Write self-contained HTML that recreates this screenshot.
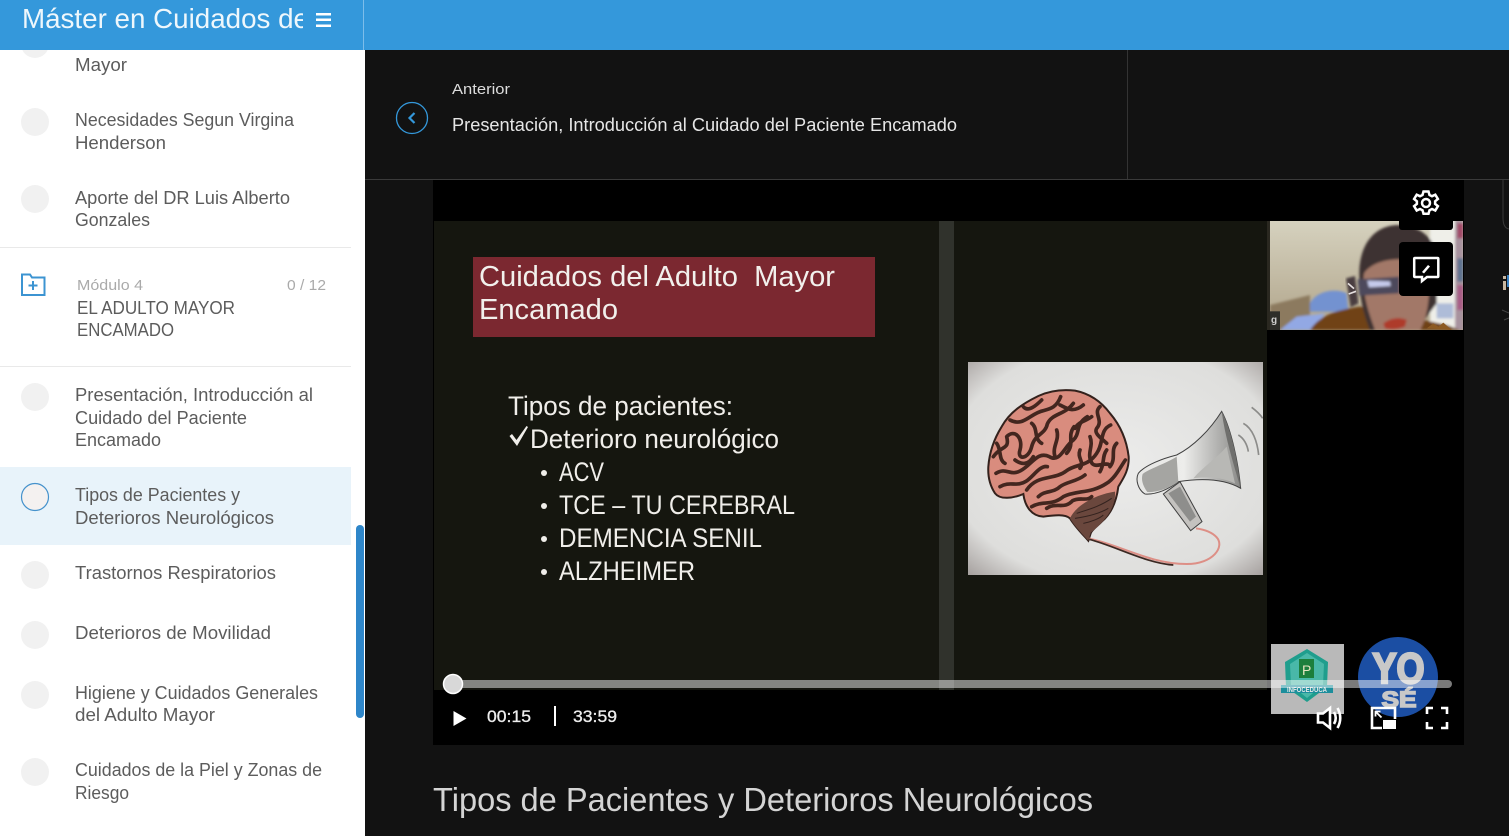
<!DOCTYPE html>
<html lang="es">
<head>
<meta charset="utf-8">
<title>Máster en Cuidados del Adulto Mayor</title>
<style>
html,body{margin:0;padding:0;width:1509px;height:836px;overflow:hidden;background:#121212}
svg{display:block;position:absolute;left:0;top:0}
text{font-family:"Liberation Sans",Arial,sans-serif;white-space:pre}
.s{font-size:18px;fill:#5c5c5c}
.v{font-size:29px;fill:#f2f0ec}
.b{font-size:27px;fill:#f0eeea}
.c{font-size:17px;fill:#eeeeee;stroke:#eeeeee;stroke-width:.3}
</style>
</head>
<body>
<svg width="1509" height="836" viewBox="0 0 1509 836" xmlns="http://www.w3.org/2000/svg">
<defs>
<clipPath id="tc"><rect x="0" y="0" width="303" height="50"/></clipPath>
<clipPath id="wc"><rect x="1270" y="221" width="193" height="109"/></clipPath>
<clipPath id="ic"><rect x="968" y="362" width="295" height="213"/></clipPath>
<radialGradient id="ig" cx="50%" cy="48%" r="80%">
<stop offset="0" stop-color="#ececeb"/><stop offset=".7" stop-color="#dededc"/><stop offset="1" stop-color="#8a8280"/>
</radialGradient>
<linearGradient id="wall" x1="0" y1="0" x2="0" y2="1"><stop offset="0" stop-color="#d6d2bf"/><stop offset="1" stop-color="#b0a48a"/></linearGradient>
<linearGradient id="bell" x1="0" y1="0" x2="1" y2="0"><stop offset="0" stop-color="#e6e6e4"/><stop offset=".45" stop-color="#ededeb"/><stop offset=".85" stop-color="#a5a5a3"/><stop offset="1" stop-color="#8a8a88"/></linearGradient>
<filter id="b2" x="-5%" y="-5%" width="110%" height="110%"><feGaussianBlur stdDeviation="4"/></filter>
</defs>

<!-- page backgrounds -->
<rect width="1509" height="836" fill="#121212"/>
<rect x="0" y="50" width="365" height="786" fill="#fff"/>

<!-- sidebar -->
<rect x="0" y="467" width="351" height="78" fill="#e8f3fa"/>
<rect x="0" y="247" width="351" height="1" fill="#e9e9e9"/>
<rect x="0" y="366" width="351" height="1" fill="#e9e9e9"/>
<g fill="#f1f1f1">
<circle cx="35" cy="44" r="14"/>
<circle cx="35" cy="122" r="14"/>
<circle cx="35" cy="199" r="14"/>
<circle cx="35" cy="397" r="14"/>
<circle cx="35" cy="575" r="14"/>
<circle cx="35" cy="635" r="14"/>
<circle cx="35" cy="695" r="14"/>
<circle cx="35" cy="772" r="14"/>
</g>
<circle cx="35" cy="497" r="13.500" fill="#f4f1f0" stroke="#4592cc" stroke-width="1.200"/>
<rect x="356" y="525" width="8" height="193" rx="4" fill="#2e86c9"/>

<text class="s" x="75" y="71" textLength="52" lengthAdjust="spacingAndGlyphs">Mayor</text>
<text class="s" x="75" y="126" textLength="219" lengthAdjust="spacingAndGlyphs">Necesidades Segun Virgina</text>
<text class="s" x="75" y="149" textLength="91" lengthAdjust="spacingAndGlyphs">Henderson</text>
<text class="s" x="75" y="204" textLength="215" lengthAdjust="spacingAndGlyphs">Aporte del DR Luis Alberto</text>
<text class="s" x="75" y="226" textLength="75" lengthAdjust="spacingAndGlyphs">Gonzales</text>
<text class="s" x="75" y="401" textLength="238" lengthAdjust="spacingAndGlyphs">Presentación, Introducción al</text>
<text class="s" x="75" y="424" textLength="172" lengthAdjust="spacingAndGlyphs">Cuidado del Paciente</text>
<text class="s" x="75" y="446" textLength="86" lengthAdjust="spacingAndGlyphs">Encamado</text>
<text class="s" x="75" y="501" textLength="165" lengthAdjust="spacingAndGlyphs">Tipos de Pacientes y</text>
<text class="s" x="75" y="524" textLength="199" lengthAdjust="spacingAndGlyphs">Deterioros Neurológicos</text>
<text class="s" x="75" y="579" textLength="201" lengthAdjust="spacingAndGlyphs">Trastornos Respiratorios</text>
<text class="s" x="75" y="639" textLength="196" lengthAdjust="spacingAndGlyphs">Deterioros de Movilidad</text>
<text class="s" x="75" y="699" textLength="243" lengthAdjust="spacingAndGlyphs">Higiene y Cuidados Generales</text>
<text class="s" x="75" y="721" textLength="140" lengthAdjust="spacingAndGlyphs">del Adulto Mayor</text>
<text class="s" x="75" y="776" textLength="247" lengthAdjust="spacingAndGlyphs">Cuidados de la Piel y Zonas de</text>
<text class="s" x="75" y="799" textLength="54" lengthAdjust="spacingAndGlyphs">Riesgo</text>

<!-- module header -->
<path d="M22 274.500h8l2 3h12.500v17.500H22z" fill="none" stroke="#3c94d2" stroke-width="2"/>
<path d="M33 281v9M28.500 285.500h9" stroke="#3c94d2" stroke-width="2" fill="none"/>
<text x="77" y="290" font-size="15" fill="#aaaaaa" textLength="66" lengthAdjust="spacingAndGlyphs">Módulo 4</text>
<text x="287" y="290" font-size="15" fill="#aaaaaa" textLength="39" lengthAdjust="spacingAndGlyphs">0 / 12</text>
<text class="s" x="77" y="314" textLength="158" lengthAdjust="spacingAndGlyphs">EL ADULTO MAYOR</text>
<text class="s" x="77" y="336" textLength="97" lengthAdjust="spacingAndGlyphs">ENCAMADO</text>

<!-- top bar -->
<rect x="0" y="0" width="1509" height="50" fill="#3498db"/>
<rect x="363" y="0" width="1" height="50" fill="#7dbdea"/>
<text x="22" y="28" font-size="28" fill="#eef7fc" clip-path="url(#tc)" textLength="287" lengthAdjust="spacingAndGlyphs">Máster en Cuidados de</text>
<g fill="#fff"><rect x="316" y="13" width="15" height="2.500"/><rect x="316" y="18.500" width="15" height="2.500"/><rect x="316" y="24.500" width="15" height="2.500"/></g>

<!-- lesson navigation -->
<rect x="365" y="179" width="1144" height="1" fill="#3a3a3a"/>
<rect x="1127" y="50" width="1" height="129" fill="#333"/>
<circle cx="412" cy="118" r="15.500" fill="none" stroke="#3498db" stroke-width="1.300"/>
<path d="M414.500 113l-5 5 5 5" fill="none" stroke="#3498db" stroke-width="2.200"/>
<text x="452" y="94" font-size="14.500" fill="#dddddd" textLength="58" lengthAdjust="spacingAndGlyphs">Anterior</text>
<text x="452" y="131" font-size="18" fill="#e6e6e6" textLength="505" lengthAdjust="spacingAndGlyphs">Presentación, Introducción al Cuidado del Paciente Encamado</text>

<!-- right edge fragments -->
<path d="M1503 180v38q0 10 6 11" fill="none" stroke="#3a3a3a" stroke-width="1"/>
<rect x="1503" y="281" width="3" height="9" fill="#c9b7a0"/><rect x="1503" y="276" width="3" height="3" fill="#c9b7a0"/>
<rect x="1507" y="275" width="2" height="12" fill="#3a80c0"/>
<path d="M1502 310l7 3M1504 320l5-2" stroke="#444" fill="none"/>

<!-- video -->
<rect x="433" y="180" width="1031" height="565" fill="#000"/>
<rect x="434" y="221" width="833" height="469" fill="#15160f"/>
<rect x="939" y="221" width="15" height="469" fill="#30322c"/>
<rect x="473" y="257" width="402" height="80" fill="#7b2830"/>
<text class="v" x="479" y="286" textLength="356" lengthAdjust="spacingAndGlyphs">Cuidados del Adulto  Mayor</text>
<text class="v" x="479" y="319" textLength="139" lengthAdjust="spacingAndGlyphs">Encamado</text>
<text class="b" x="508" y="415" textLength="225" lengthAdjust="spacingAndGlyphs">Tipos de pacientes:</text>
<path d="M509.500 436l2.500-2 4.500 6 10-14 1.500 1-11 19z" fill="#f0eeea"/>
<text class="b" x="530" y="448" textLength="249" lengthAdjust="spacingAndGlyphs">Deterioro neurológico</text>
<g fill="#f0eeea">
<circle cx="544" cy="473" r="3"/><circle cx="544" cy="506" r="3"/><circle cx="544" cy="539" r="3"/><circle cx="544" cy="572" r="3"/>
</g>
<text class="b" x="559" y="481" textLength="45" lengthAdjust="spacingAndGlyphs">ACV</text>
<text class="b" x="559" y="514" textLength="236" lengthAdjust="spacingAndGlyphs">TCE – TU CEREBRAL</text>
<text class="b" x="559" y="547" textLength="203" lengthAdjust="spacingAndGlyphs">DEMENCIA SENIL</text>
<text class="b" x="559" y="580" textLength="136" lengthAdjust="spacingAndGlyphs">ALZHEIMER</text>

<!-- brain and megaphone -->
<rect x="968" y="362" width="295" height="213" fill="url(#ig)"/>
<g clip-path="url(#ic)"><g transform="translate(960 350) scale(.33333)">
<path d="M85 350C88 310 100 270 125 230C150 185 190 160 235 138C270 122 310 118 345 122C385 130 420 150 450 190C480 225 500 270 506 320C508 360 490 385 475 410C470 450 455 490 425 515C410 530 395 540 392 550L385 572C370 555 345 530 330 505C315 492 285 495 250 500C215 498 195 470 190 432C160 445 120 450 105 430C92 410 83 385 85 350Z" fill="#d98c7e" stroke="#33211c" stroke-width="6"/>
<path d="M330 505C345 470 400 435 465 425C468 470 440 510 392 548L385 572C370 555 345 530 330 505Z" fill="#6a473d"/>
<g fill="none" stroke="#43261f" stroke-width="11" stroke-linejoin="round" stroke-linecap="round">
<path d="M100 320C125 285 150 300 140 260C165 235 190 265 180 300C170 330 205 330 215 290C225 250 255 255 262 222C275 190 315 195 340 160"/>
<path d="M150 210C190 232 210 190 250 182C272 176 290 172 302 140"/>
<path d="M190 170C205 190 235 160 245 150M300 165C320 175 340 190 370 165"/>
<path d="M108 370C140 350 150 380 182 362C215 345 232 302 268 320C300 340 312 290 340 270C362 250 345 222 382 200"/>
<path d="M120 410C150 392 170 412 198 394C220 380 240 345 262 350"/>
<path d="M200 420C232 372 282 392 320 362C350 340 382 352 410 310C432 280 418 240 452 225"/>
<path d="M215 470C250 450 272 470 310 440C350 420 392 432 440 400C465 385 482 350 496 330"/>
<path d="M235 440C255 420 280 430 300 410C320 395 350 395 375 375"/>
<path d="M390 260C402 290 378 310 396 340C410 355 430 335 450 345"/>
<path d="M342 230C320 260 346 280 320 310M290 240C300 270 275 290 285 320"/>
<path d="M420 170C398 190 432 210 410 235C400 250 425 265 440 280"/>
<path d="M260 475C290 455 312 480 338 452C360 440 380 455 395 440"/>
<path d="M215 220C235 235 220 265 245 280M110 280C125 300 115 330 135 340"/>
<path d="M470 280C450 300 470 325 450 350M395 200C375 215 355 215 345 235"/>
<path d="M165 330C185 345 205 345 220 320"/>
<path d="M360 300C350 325 375 335 360 355M440 300C425 320 435 340 420 365"/>
</g>
<g stroke="#33221e" stroke-width="3" fill="none"><path d="M350 490C380 480 420 470 455 445M345 505C380 500 420 490 445 475M370 520C395 515 420 505 430 495"/></g>
<path d="M388 566C480 585 570 642 680 642C760 642 795 590 770 562C755 545 730 538 708 535" fill="none" stroke="#dd8f86" stroke-width="6"/>
<path d="M388 568C470 590 560 640 640 645" fill="none" stroke="#3b2822" stroke-width="5"/>
<path d="M610 432L660 395L726 515L692 542Z" fill="#c4c2bf" stroke="#3f3f3f" stroke-width="3"/>
<path d="M625 430L660 410L708 500L690 515Z" fill="#8e8e8c"/>
<path d="M535 370C555 345 610 325 650 315C700 290 750 240 785 184C815 240 835 340 842 415C790 385 720 385 655 395C630 415 590 435 555 432C535 420 525 390 535 370Z" fill="url(#bell)" stroke="#3f3f3f" stroke-width="3"/>
<path d="M785 184C815 240 835 340 842 415C820 340 795 260 785 184Z" fill="#6f6f6d"/>
<path d="M548 372C570 355 620 340 650 320L655 395C630 415 590 428 562 426C550 410 542 390 548 372Z" fill="#a5a5a2"/>
<path d="M700 385C730 350 770 325 800 290L825 400C780 380 740 380 700 385Z" fill="#b8b8b5"/>
<g fill="none" stroke="#8c8c8a" stroke-width="5"><path d="M835 255C852 265 862 285 865 305"/><path d="M850 220C878 235 892 275 896 315"/><path d="M875 172C888 182 900 192 908 205"/></g>
</g></g>

<!-- webcam -->
<rect x="1267" y="221" width="3" height="109" fill="#2a2820"/>
<g clip-path="url(#wc)"><g transform="translate(1260 170) scale(.33333)">
<rect x="30" y="150" width="580" height="330" fill="url(#wall)"/>
<g filter="url(#b2)">
<path d="M30 405L150 375L150 480H30Z" fill="#8c7a5f"/>
<rect x="510" y="150" width="80" height="330" fill="#efefe9"/>
<rect x="585" y="150" width="25" height="330" fill="#a7929e"/>
<rect x="592" y="160" width="18" height="45" fill="#a14a68"/>
<rect x="592" y="265" width="18" height="70" fill="#5e7290"/>
<rect x="592" y="345" width="18" height="75" fill="#a85c86"/>
<path d="M150 400C170 360 230 355 260 370L265 425H150Z" fill="#7392d0"/>
<path d="M60 480L110 440L195 430L160 480Z" fill="#92a8e4"/>
<path d="M530 400h50v45h-50z" fill="#aebcd8"/>
<path d="M150 480C180 435 230 420 300 410L560 465L600 480Z" fill="#6f4317"/>
<path d="M298 320C295 240 330 175 400 166C470 160 530 200 530 270L530 400L470 480L330 480C310 430 298 380 298 320Z" fill="#3e3232"/>
<path d="M312 310C340 265 440 255 495 285C515 330 510 430 480 480H345C322 420 305 360 312 310Z" fill="#a27868"/>
<path d="M293 328l125 -8v50l-120 7z" fill="#4e4a5c"/>
<path d="M322 332l68 2 2 14 -65 4z" fill="#c6cbec"/>
<path d="M370 460q35 -25 70 -10l-5 20q-30 12 -60 5z" fill="#ae3a2c"/>
</g>
<path d="M258 325L285 318L295 400L272 412Z" fill="#4a3e40" filter="url(#b2)"/>
<path d="M264 340l18 16M266 372l22 -8" stroke="#e6e0e0" stroke-width="5"/>
<path d="M500 475l20-15 15 10 15-12 25 22z" fill="#8c5a22"/>
<rect x="22" y="424" width="38" height="56" fill="#2e2e2a"/>
</g></g>
<text x="1271" y="323" font-size="10" font-weight="bold" fill="#cfcfcf">g</text>

<!-- gear + annotate overlays -->
<rect x="1399" y="180" width="54" height="50" rx="3" fill="#000"/>
<rect x="1399" y="242" width="54" height="54" rx="4" fill="#000"/>
<g fill="none" stroke="#fff" stroke-width="2.500">
<path d="M1423.500 191.500h5l1 3.500 2.500 1.200 3.300-1.500 2.600 4.300-2.800 2.300v2.600l2.800 2.300-2.600 4.300-3.300-1.500-2.500 1.200-1 3.500h-5l-1-3.500-2.500-1.200-3.300 1.500-2.600-4.300 2.800-2.300v-2.600l-2.800-2.300 2.600-4.300 3.300 1.500 2.500-1.200z"/>
<circle cx="1426" cy="203" r="4"/>
<path d="M1415 258h22.500a.8.800 0 0 1 .8.800v17.400a.8.800 0 0 1-.8.800H1427l-5 4v-4h-7a.8.800 0 0 1-.8-.8V258.800a.8.800 0 0 1 .8-.8z"/>
</g>
<path d="M1422 272l6-7 2 1.500-6 7z" fill="#fff"/>

<!-- logos -->
<rect x="1271" y="644" width="73" height="70" fill="#b9b9b9"/>
<path d="M1307 649L1328 662L1327 687L1307 702L1286 687L1285 662Z" fill="#1f9e8d"/>
<path d="M1307 653L1324 664L1323 685L1307 698L1291 685L1290 664Z" fill="#49b8a8"/>
<rect x="1299" y="659" width="15" height="19" fill="#1c7f3c"/>
<text x="1302" y="675" font-size="14" fill="#e5e5c0">P</text>
<rect x="1281" y="685" width="52" height="8" fill="#1c8e9c"/>
<text x="1307" y="692" text-anchor="middle" font-size="7" font-weight="bold" fill="#e8e8e8" textLength="40" lengthAdjust="spacingAndGlyphs">INFOCEDUCA</text>
<circle cx="1398" cy="677" r="40" fill="#1b4ea3"/>
<text x="1398.500" y="683" text-anchor="middle" font-size="43" font-weight="bold" fill="#c8c8c8" stroke="#c8c8c8" stroke-width="2.500" textLength="52" lengthAdjust="spacingAndGlyphs">YO</text>
<text x="1399" y="707" text-anchor="middle" font-size="22" font-weight="bold" fill="#c8c8c8" stroke="#c8c8c8" stroke-width="1.500" textLength="35" lengthAdjust="spacingAndGlyphs">SÉ</text>

<!-- controls -->
<rect x="453" y="680" width="999" height="8" rx="4" fill="#fff" fill-opacity=".48"/>
<circle cx="453" cy="684" r="9.500" fill="#d8d8d8" stroke="#fff" stroke-width="1.500"/>
<path d="M453.500 711L466.500 718.500L453.500 726Z" fill="#fff"/>
<text class="c" x="487" y="722" textLength="44" lengthAdjust="spacingAndGlyphs">00:15</text>
<rect x="554" y="706" width="2" height="20" fill="#fff"/>
<text class="c" x="573" y="722" textLength="44" lengthAdjust="spacingAndGlyphs">33:59</text>
<g fill="none" stroke="#fff" stroke-width="2.600">
<path d="M1318 713.500h5l7-5.500v20l-7-5.500h-5z" fill="#000"/>
<path d="M1334 712q3.500 6 0 12M1337.500 708q5.500 10 0 20"/>
<path d="M1382 728h-10v-20h23v11"/>
<path d="M1427 714v-6h6M1441 708h6v6M1447 722v6h-6M1433 728h-6v-6"/>
<path d="M1375.500 711.500l6 6M1375.500 716.500v-5h5" stroke-width="1.800"/>
</g>
<rect x="1383" y="720" width="13" height="9" fill="#fff"/>

<!-- lesson title -->
<text x="433" y="811" font-size="33" fill="#d4d4d4" textLength="660" lengthAdjust="spacingAndGlyphs">Tipos de Pacientes y Deterioros Neurológicos</text>
</svg>
</body>
</html>
